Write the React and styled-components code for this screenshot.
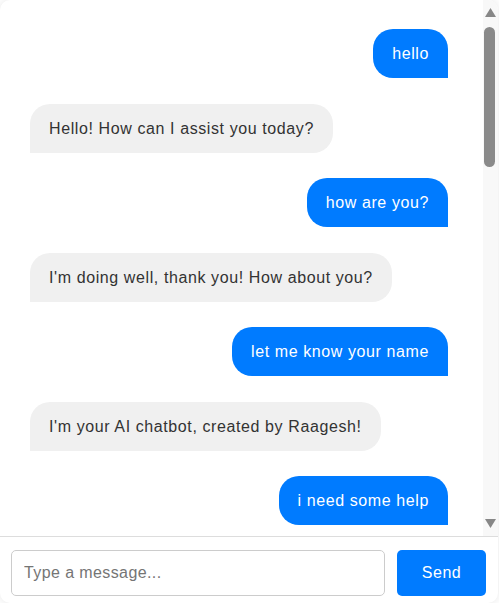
import React from 'react'
import styled, { createGlobalStyle } from 'styled-components'

const GlobalStyle = createGlobalStyle`
  html, body {
    margin: 0;
    padding: 0;
    background: #ffffff;
    font-family: "Liberation Sans", Arial, sans-serif;
  }
`

const ChatContainer = styled.div`
  width: 498px;
  height: 603px;
  display: flex;
  flex-direction: column;
  background: #ffffff;
  border-radius: 10px;
  box-shadow: 0 0 10px rgba(0, 0, 0, 0.1);
  overflow: hidden;
`

const ChatBody = styled.div`
  flex: 1;
  min-height: 0;
  display: flex;
`

const MessageList = styled.div`
  flex: 1;
  min-width: 0;
  overflow-y: auto;
  scrollbar-width: none;
  padding: 29px 35px 29px 30px;
  display: flex;
  flex-direction: column;
  gap: 25.5px;
  &::-webkit-scrollbar {
    display: none;
  }
`

const ScrollRail = styled.div`
  width: 15px;
  flex-shrink: 0;
  display: flex;
  flex-direction: column;
  background: #f8f8f8;
`

const RailButton = styled.div`
  height: 25px;
  display: flex;
  align-items: center;
  justify-content: center;
  flex-shrink: 0;
`

const RailTrack = styled.div`
  flex: 1;
  padding: 2px 2px 0 1px;
`

const Thumb = styled.div`
  width: 11px;
  height: 140px;
  border-radius: 6px;
  background: #8a8a8a;
`

const Bubble = styled.div`
  align-self: ${p => (p.$user ? 'flex-end' : 'flex-start')};
  max-width: 92%;
  padding: 15px 19px;
  font-size: 16px;
  line-height: 19px;
  letter-spacing: 0.6px;
  color: ${p => (p.$user ? '#ffffff' : '#333333')};
  background: ${p => (p.$user ? '#007bff' : '#f0f0f0')};
  border-radius: ${p => (p.$user ? '20px 20px 0 20px' : '20px 20px 20px 0')};
  flex-shrink: 0;
`

const InputBar = styled.div`
  display: flex;
  gap: 12px;
  padding: 13px 12px 7px 11px;
  border-top: 1px solid #dddddd;
`

const TextInput = styled.input`
  flex: 1;
  padding: 13px 12px;
  font-size: 16px;
  line-height: 18.4px;
  letter-spacing: 0.4px;
  font-family: "Liberation Sans", Arial, sans-serif;
  border: 1px solid #cccccc;
  border-radius: 5px;
  outline: none;
  &::placeholder {
    color: #757575;
  }
`

const SendButton = styled.button`
  width: 89px;
  background: #007bff;
  color: #ffffff;
  border: none;
  border-radius: 5px;
  font-size: 16px;
  letter-spacing: 0.5px;
  font-family: "Liberation Sans", Arial, sans-serif;
  cursor: pointer;
`

const Arrow = ({ down }) => (
  <svg width="11" height="9" viewBox="0 0 11 9">
    <polygon
      points={down ? '0,0 11,0 5.5,9' : '5.5,0 11,9 0,9'}
      fill="#878787"
    />
  </svg>
)

const messages = [
  { user: true, text: 'hello' },
  { user: false, text: 'Hello! How can I assist you today?' },
  { user: true, text: 'how are you?' },
  { user: false, text: "I'm doing well, thank you! How about you?" },
  { user: true, text: 'let me know your name' },
  { user: false, text: "I'm your AI chatbot, created by Raagesh!" },
  { user: true, text: 'i need some help' },
  { user: false, text: 'Sure! What do you need help with?' },
  { user: true, text: 'i want to learn react' },
  { user: false, text: 'Great choice! Start with components.' },
  { user: true, text: 'what are components?' },
  { user: false, text: 'They are reusable pieces of UI.' },
  { user: true, text: 'ok thanks' },
  { user: false, text: "You're welcome! Anything else?" },
  { user: true, text: 'what is state?' },
  { user: false, text: 'State is data that changes over time.' },
  { user: true, text: 'and props?' },
  { user: false, text: 'Props pass data into components.' },
  { user: true, text: 'got it' },
  { user: false, text: 'Awesome! Keep practicing.' },
  { user: true, text: 'tell me a joke' },
  { user: false, text: 'Why do programmers prefer dark mode?' },
  { user: true, text: 'why?' },
  { user: false, text: 'Because light attracts bugs!' },
]

export default function App() {
  return (
    <>
      <GlobalStyle />
      <ChatContainer>
        <ChatBody>
          <MessageList>
            {messages.map((m, i) => (
              <Bubble key={i} $user={m.user}>
                {m.text}
              </Bubble>
            ))}
          </MessageList>
          <ScrollRail>
            <RailButton>
              <Arrow />
            </RailButton>
            <RailTrack>
              <Thumb />
            </RailTrack>
            <RailButton>
              <Arrow down />
            </RailButton>
          </ScrollRail>
        </ChatBody>
        <InputBar>
          <TextInput type="text" placeholder="Type a message..." />
          <SendButton>Send</SendButton>
        </InputBar>
      </ChatContainer>
    </>
  )
}
